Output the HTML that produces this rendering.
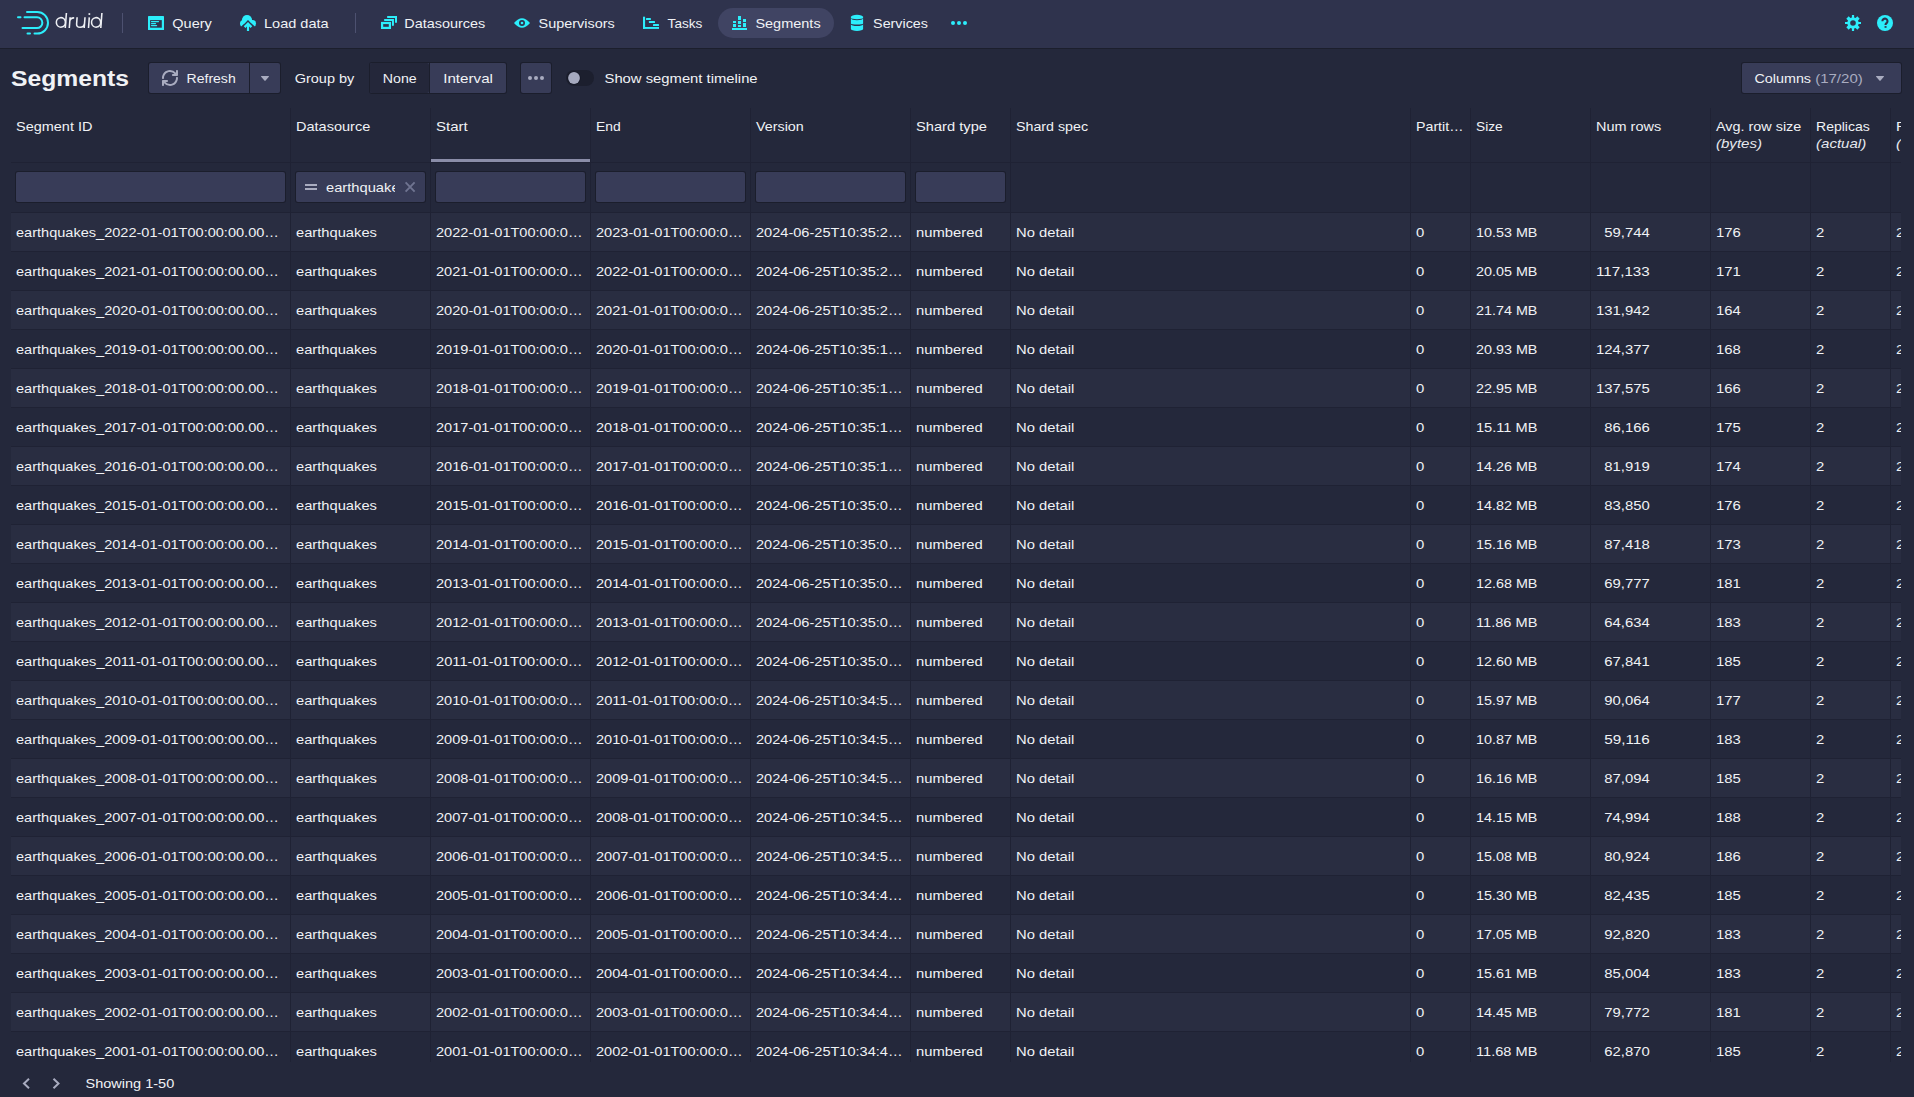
<!DOCTYPE html>
<html><head><meta charset="utf-8"><title>Segments</title>
<style>
html,body{margin:0;padding:0;background:#24283b;overflow:hidden;}
svg{display:block;}
svg{font-family:"Liberation Sans",sans-serif;font-size:13.6px;fill:#f0f2f5;}
</style></head><body>
<svg width="1914" height="1097" viewBox="0 0 1914 1097">
<rect x="0" y="0" width="1914" height="1097" fill="#24283b"/>
<rect x="0" y="0" width="1914" height="48" fill="#2f334d"/>
<rect x="0" y="48" width="1914" height="1" fill="#1c1f2d"/>
<g fill="none" stroke="#2ceefb" stroke-width="2" stroke-linecap="round"><path d="M27,12 H37.2 A10.8,10.8 0 0 1 37.2,33.6 H34.5"/><path d="M24.5,17.3 H37 A5.35,5.35 0 0 1 37,28 H22.5"/><path d="M18,17.3 H20.5"/><path d="M27.5,33.6 H30"/></g>
<g fill="none" stroke="#eef0f4" stroke-width="1.55" stroke-linecap="butt"><ellipse cx="60.9" cy="22.4" rx="4.55" ry="4.75" transform="rotate(-8 60.9 22.4)"/><path d="M66.4,13 L65.3,28"/><path d="M70.1,17.2 L69.3,28 M69.9,20.5 Q71,17.6 74.2,17.9"/><path d="M77.1,17.2 L76.6,24 Q76.4,27.3 80.2,27.3 Q84,27.3 84.3,23.8 M85,17.2 L84.2,28"/><path d="M89.3,17.4 L88.5,28"/><ellipse cx="96.1" cy="22.4" rx="4.55" ry="4.75" transform="rotate(-8 96.1 22.4)"/><path d="M101.9,13 L100.8,28"/></g><rect x="88.5" y="13.2" width="1.7" height="1.7" fill="#eef0f4"/>
<rect x="122" y="13" width="1" height="20" fill="#4d5170"/>
<rect x="355" y="13" width="1" height="20" fill="#4d5170"/>
<rect x="718" y="8" width="116" height="30" fill="#404463" rx="15"/>
<g transform="translate(148,16)" fill="#2ceefb"><rect x="0" y="0" width="16" height="14" rx="0.6"/><rect x="2.1" y="4.1" width="11.7" height="7.6" fill="#2f334d"/><rect x="2.9" y="4.9" width="8.2" height="1.3" rx="0.6"/><rect x="2.9" y="6.9" width="5.2" height="1.3" rx="0.6"/><rect x="2.9" y="8.9" width="6.3" height="1.3" rx="0.6"/></g>
<clipPath id="cu"><path d="M-1,-1 H17 V13.8 L8,4.8 L-1,13.8 Z"/></clipPath>
<g transform="translate(240,15)" fill="#2ceefb"><g clip-path="url(#cu)"><circle cx="7" cy="5.1" r="5.1"/><circle cx="3.6" cy="8.6" r="3.6"/><circle cx="12.5" cy="8.4" r="3.5"/><rect x="3.6" y="5" width="9" height="6"/></g><path d="M4.6,12.1 L8,8.7 L11.4,12.1" stroke="#2ceefb" stroke-width="2.4" fill="none"/><rect x="6.9" y="9" width="2.2" height="7"/></g>
<g transform="translate(381,16)" fill="#2ceefb"><g fill="none" stroke="#2ceefb"><rect x="1.1" y="7" width="7.8" height="4.9" stroke-width="2.2"/><path d="M3.9,3.9 H11.95 V9" stroke-width="2" stroke-linecap="round"/><path d="M6.9,0.9 H15 V6" stroke-width="2" stroke-linecap="round"/></g></g>
<g transform="translate(514,15)" fill="#2ceefb"><path d="M0,8 Q8,-1.5 16,8 Q8,17.5 0,8 Z"/><circle cx="8" cy="8" r="3" fill="#2f334d"/><circle cx="8" cy="8" r="1.3"/></g>
<g transform="translate(643,15)" fill="#2ceefb"><rect x="0" y="1.7" width="2.1" height="12.2"/><rect x="0" y="12" width="16" height="1.9"/><rect x="3" y="2.9" width="4.9" height="2" rx="0.5"/><rect x="5.9" y="6" width="6.1" height="2" rx="0.5"/><rect x="10" y="9.1" width="6" height="1.9" rx="0.5"/></g>
<g fill="#2ceefb" shape-rendering="crispEdges"><rect x="732" y="28" width="15" height="2"/><rect x="733" y="21" width="3" height="2"/><rect x="733" y="24" width="3" height="3"/><rect x="738" y="16" width="3" height="4"/><rect x="738" y="21" width="3" height="3"/><rect x="738" y="25" width="3" height="2"/><rect x="743" y="19" width="3" height="3"/><rect x="743" y="23" width="3" height="4"/></g>
<g fill="#2ceefb"><path d="M850.9,16.8 A6.1,2 0 0 1 863.1,16.8 V18 A6.1,1.2 0 0 1 850.9,18 Z"/><path d="M850.9,18.6 A6.1,1.6 0 0 0 863.1,18.6 V23.6 A6.1,1 0 0 1 850.9,23.6 Z"/><path d="M850.9,24.2 A6.1,1.8 0 0 0 863.1,24.2 V29 A6.1,1.9 0 0 1 850.9,29 Z"/></g>
<g transform="translate(951,15)" fill="#2ceefb"><circle cx="2" cy="8" r="2"/><circle cx="8" cy="8" r="2"/><circle cx="14" cy="8" r="2"/></g>
<g transform="translate(1845,15)" fill="#2ceefb"><path fill-rule="evenodd" d="M6.9,0 H9.1 V2.4 L10.6,3 L12.3,1.3 L14.7,3.7 L13,5.4 L13.6,6.9 H16 V9.1 H13.6 L13,10.6 L14.7,12.3 L12.3,14.7 L10.6,13 L9.1,13.6 V16 H6.9 V13.6 L5.4,13 L3.7,14.7 L1.3,12.3 L3,10.6 L2.4,9.1 H0 V6.9 H2.4 L3,5.4 L1.3,3.7 L3.7,1.3 L5.4,3 L6.9,2.4 Z M8,5.2 A2.8,2.8 0 1 0 8,10.8 A2.8,2.8 0 1 0 8,5.2 Z"/></g>
<g transform="translate(1877,15)" fill="#2ceefb"><circle cx="8" cy="8" r="8"/><path d="M5.4,6.2 A2.55,2.5 0 1 1 9.9,7.7 C9.1,8.5 8.5,8.8 8.5,9.9" fill="none" stroke="#2f334d" stroke-width="2.1"/><rect x="7.55" y="11.1" width="2" height="1.7" fill="#2f334d"/></g>
<text x="172.30" y="28.00" textLength="39.50" lengthAdjust="spacingAndGlyphs">Query</text>
<text x="264.00" y="28.00" textLength="64.59" lengthAdjust="spacingAndGlyphs">Load data</text>
<text x="404.30" y="28.00" textLength="80.97" lengthAdjust="spacingAndGlyphs">Datasources</text>
<text x="538.60" y="28.00" textLength="76.20" lengthAdjust="spacingAndGlyphs">Supervisors</text>
<text x="667.60" y="28.00" textLength="34.81" lengthAdjust="spacingAndGlyphs">Tasks</text>
<text x="755.40" y="28.00" textLength="65.25" lengthAdjust="spacingAndGlyphs">Segments</text>
<text x="873.10" y="28.00" textLength="54.80" lengthAdjust="spacingAndGlyphs">Services</text>
<text x="11.00" y="86.00" font-weight="700" font-size="22.30" textLength="118.02" lengthAdjust="spacingAndGlyphs">Segments</text>
<rect x="148" y="62" width="133" height="32" fill="#1b1e2c" rx="3"/>
<rect x="149" y="63" width="131" height="30" fill="#383c58" rx="2"/>
<rect x="249" y="63" width="1" height="30" fill="#1b1e2c"/>
<g transform="translate(162,70)" fill="#a9acc0"><path d="M14.99 6.99c-.55 0-1 .45-1 1 0 3.31-2.69 6-6 6-1.77 0-3.36-.78-4.46-2h1.46c.55 0 1-.45 1-1s-.45-1-1-1h-4c-.55 0-1 .45-1 1v4c0 .55.45 1 1 1s1-.45 1-1v-1.74a7.95 7.95 0 006 2.74c4.42 0 8-3.58 8-8 0-.55-.45-1-1-1zm0-7c-.55 0-1 .45-1 1v1.74a7.95 7.95 0 00-6-2.74c-4.42 0-8 3.58-8 8 0 .55.45 1 1 1s1-.45 1-1c0-3.31 2.69-6 6-6 1.77 0 3.36.78 4.46 2h-1.46c-.55 0-1 .45-1 1s.45 1 1 1h4c.55 0 1-.45 1-1v-4c0-.55-.45-1-1-1z"/></g>
<text x="186.60" y="83.00" textLength="49.09" lengthAdjust="spacingAndGlyphs">Refresh</text>
<g transform="translate(257,70)" fill="#a9acc0"><path d="M12 6.5c0-.28-.22-.5-.5-.5h-7a.495.495 0 00-.37.83l3.5 4c.09.1.22.17.37.17s.28-.07.37-.17l3.5-4c.08-.09.13-.2.13-.33z"/></g>
<text x="294.70" y="83.00" textLength="59.64" lengthAdjust="spacingAndGlyphs">Group by</text>
<rect x="369" y="62" width="138" height="32" fill="#1b1e2c" rx="3"/>
<rect x="370" y="63" width="136" height="30" fill="#383c58" rx="2"/>
<rect x="370" y="63" width="59" height="30" fill="#24273a" rx="2"/>
<rect x="429" y="63" width="1" height="30" fill="#1b1e2c"/>
<text x="382.80" y="83.00" textLength="33.91" lengthAdjust="spacingAndGlyphs">None</text>
<text x="443.20" y="83.00" textLength="49.77" lengthAdjust="spacingAndGlyphs">Interval</text>
<rect x="520" y="62" width="32" height="32" fill="#1b1e2c" rx="3"/>
<rect x="521" y="63" width="30" height="30" fill="#383c58" rx="2"/>
<g transform="translate(528,70)" fill="#a9acc0"><circle cx="2" cy="8" r="2"/><circle cx="8" cy="8" r="2"/><circle cx="14" cy="8" r="2"/></g>
<rect x="566" y="70" width="28" height="16" fill="#1c1f2e" rx="8"/>
<circle cx="574" cy="78" r="6.6" fill="#131624"/><circle cx="574" cy="78" r="5.9" fill="#a5a9be"/>
<text x="604.50" y="83.00" textLength="153.12" lengthAdjust="spacingAndGlyphs">Show segment timeline</text>
<rect x="1741" y="62" width="161" height="32" fill="#1b1e2c" rx="3"/>
<rect x="1742" y="63" width="159" height="30" fill="#383c58" rx="2"/>
<text x="1754.50" y="83.00" textLength="56.53" lengthAdjust="spacingAndGlyphs">Columns</text>
<text x="1815.16" y="83.00" fill="#a9acc0" textLength="47.59" lengthAdjust="spacingAndGlyphs">(17/20)</text>
<g transform="translate(1872,70)" fill="#a9acc0"><path d="M12 6.5c0-.28-.22-.5-.5-.5h-7a.495.495 0 00-.37.83l3.5 4c.09.1.22.17.37.17s.28-.07.37-.17l3.5-4c.08-.09.13-.2.13-.33z"/></g>
<clipPath id="tc"><rect x="11" y="0" width="1890" height="1097"/></clipPath>
<g clip-path="url(#tc)">
<rect x="11" y="213" width="1890" height="38" fill="#292d41"/>
<rect x="11" y="291" width="1890" height="38" fill="#292d41"/>
<rect x="11" y="369" width="1890" height="38" fill="#292d41"/>
<rect x="11" y="447" width="1890" height="38" fill="#292d41"/>
<rect x="11" y="525" width="1890" height="38" fill="#292d41"/>
<rect x="11" y="603" width="1890" height="38" fill="#292d41"/>
<rect x="11" y="681" width="1890" height="38" fill="#292d41"/>
<rect x="11" y="759" width="1890" height="38" fill="#292d41"/>
<rect x="11" y="837" width="1890" height="38" fill="#292d41"/>
<rect x="11" y="915" width="1890" height="38" fill="#292d41"/>
<rect x="11" y="993" width="1890" height="38" fill="#292d41"/>
<rect x="11" y="162" width="1890" height="1" fill="#1f2234"/>
<rect x="11" y="212" width="1890" height="1" fill="#1f2234"/>
<rect x="11" y="251" width="1890" height="1" fill="#1f2234"/>
<rect x="11" y="290" width="1890" height="1" fill="#1f2234"/>
<rect x="11" y="329" width="1890" height="1" fill="#1f2234"/>
<rect x="11" y="368" width="1890" height="1" fill="#1f2234"/>
<rect x="11" y="407" width="1890" height="1" fill="#1f2234"/>
<rect x="11" y="446" width="1890" height="1" fill="#1f2234"/>
<rect x="11" y="485" width="1890" height="1" fill="#1f2234"/>
<rect x="11" y="524" width="1890" height="1" fill="#1f2234"/>
<rect x="11" y="563" width="1890" height="1" fill="#1f2234"/>
<rect x="11" y="602" width="1890" height="1" fill="#1f2234"/>
<rect x="11" y="641" width="1890" height="1" fill="#1f2234"/>
<rect x="11" y="680" width="1890" height="1" fill="#1f2234"/>
<rect x="11" y="719" width="1890" height="1" fill="#1f2234"/>
<rect x="11" y="758" width="1890" height="1" fill="#1f2234"/>
<rect x="11" y="797" width="1890" height="1" fill="#1f2234"/>
<rect x="11" y="836" width="1890" height="1" fill="#1f2234"/>
<rect x="11" y="875" width="1890" height="1" fill="#1f2234"/>
<rect x="11" y="914" width="1890" height="1" fill="#1f2234"/>
<rect x="11" y="953" width="1890" height="1" fill="#1f2234"/>
<rect x="11" y="992" width="1890" height="1" fill="#1f2234"/>
<rect x="11" y="1031" width="1890" height="1" fill="#1f2234"/>
<rect x="290" y="108" width="1" height="954" fill="#1f2234"/>
<rect x="430" y="108" width="1" height="954" fill="#1f2234"/>
<rect x="590" y="108" width="1" height="954" fill="#1f2234"/>
<rect x="750" y="108" width="1" height="954" fill="#1f2234"/>
<rect x="910" y="108" width="1" height="954" fill="#1f2234"/>
<rect x="1010" y="108" width="1" height="954" fill="#1f2234"/>
<rect x="1410" y="108" width="1" height="954" fill="#1f2234"/>
<rect x="1470" y="108" width="1" height="954" fill="#1f2234"/>
<rect x="1590" y="108" width="1" height="954" fill="#1f2234"/>
<rect x="1710" y="108" width="1" height="954" fill="#1f2234"/>
<rect x="1810" y="108" width="1" height="954" fill="#1f2234"/>
<rect x="1890" y="108" width="1" height="954" fill="#1f2234"/>
<rect x="431" y="159" width="159" height="3" fill="#8a8da8"/>
<text x="16.00" y="131.00" textLength="76.45" lengthAdjust="spacingAndGlyphs">Segment ID</text>
<text x="296.00" y="131.00" textLength="74.20" lengthAdjust="spacingAndGlyphs">Datasource</text>
<text x="436.00" y="131.00" textLength="31.75" lengthAdjust="spacingAndGlyphs">Start</text>
<text x="596.00" y="131.00" textLength="24.70" lengthAdjust="spacingAndGlyphs">End</text>
<text x="756.00" y="131.00" textLength="47.78" lengthAdjust="spacingAndGlyphs">Version</text>
<text x="916.00" y="131.00" textLength="70.97" lengthAdjust="spacingAndGlyphs">Shard type</text>
<text x="1016.00" y="131.00" textLength="72.09" lengthAdjust="spacingAndGlyphs">Shard spec</text>
<text x="1416.00" y="131.00" textLength="47.38" lengthAdjust="spacingAndGlyphs">Partit…</text>
<text x="1476.00" y="131.00" textLength="26.69" lengthAdjust="spacingAndGlyphs">Size</text>
<text x="1596.00" y="131.00" textLength="65.14" lengthAdjust="spacingAndGlyphs">Num rows</text>
<text x="1716.00" y="131.00" textLength="85.28" lengthAdjust="spacingAndGlyphs">Avg. row size</text>
<text x="1816.00" y="131.00" textLength="53.80" lengthAdjust="spacingAndGlyphs">Replicas</text>
<text x="1896.00" y="131.00" textLength="114.12" lengthAdjust="spacingAndGlyphs">Replication factor</text>
<text x="1716.00" y="147.50" font-style="italic" fill="#e6e8ee" textLength="45.95" lengthAdjust="spacingAndGlyphs">(bytes)</text>
<text x="1816.00" y="147.50" font-style="italic" fill="#e6e8ee" textLength="50.17" lengthAdjust="spacingAndGlyphs">(actual)</text>
<text x="1896.00" y="147.50" font-style="italic" fill="#e6e8ee" textLength="49.91" lengthAdjust="spacingAndGlyphs">(target)</text>
<rect x="15" y="171" width="271" height="32" fill="#1b1e2c" rx="3"/>
<rect x="16" y="172" width="269" height="30" fill="#383c58" rx="2"/>
<rect x="295" y="171" width="131" height="32" fill="#1b1e2c" rx="3"/>
<rect x="296" y="172" width="129" height="30" fill="#383c58" rx="2"/>
<rect x="435" y="171" width="151" height="32" fill="#1b1e2c" rx="3"/>
<rect x="436" y="172" width="149" height="30" fill="#383c58" rx="2"/>
<rect x="595" y="171" width="151" height="32" fill="#1b1e2c" rx="3"/>
<rect x="596" y="172" width="149" height="30" fill="#383c58" rx="2"/>
<rect x="755" y="171" width="151" height="32" fill="#1b1e2c" rx="3"/>
<rect x="756" y="172" width="149" height="30" fill="#383c58" rx="2"/>
<rect x="915" y="171" width="91" height="32" fill="#1b1e2c" rx="3"/>
<rect x="916" y="172" width="89" height="30" fill="#383c58" rx="2"/>
<g transform="translate(303,179)" fill="#a9acc0"><rect x="2" y="5" width="12" height="2"/><rect x="2" y="9" width="12" height="2"/></g>
<clipPath id="fc"><rect x="326" y="172" width="69" height="30"/></clipPath>
<text x="326.00" y="192.00" textLength="80.92" lengthAdjust="spacingAndGlyphs" clip-path="url(#fc)">earthquakes</text>
<path d="M405.6,182.4 L414.6,191.6 M414.6,182.4 L405.6,191.6" stroke="#6f7491" stroke-width="1.9" fill="none"/>
<text x="16.00" y="237.00" textLength="262.86" lengthAdjust="spacingAndGlyphs">earthquakes_2022-01-01T00:00:00.00…</text>
<text x="296.00" y="237.00" textLength="80.92" lengthAdjust="spacingAndGlyphs">earthquakes</text>
<text x="436.00" y="237.00" textLength="146.52" lengthAdjust="spacingAndGlyphs">2022-01-01T00:00:0…</text>
<text x="596.00" y="237.00" textLength="146.52" lengthAdjust="spacingAndGlyphs">2023-01-01T00:00:0…</text>
<text x="756.00" y="237.00" textLength="146.52" lengthAdjust="spacingAndGlyphs">2024-06-25T10:35:2…</text>
<text x="916.00" y="237.00" textLength="66.69" lengthAdjust="spacingAndGlyphs">numbered</text>
<text x="1016.00" y="237.00" textLength="58.33" lengthAdjust="spacingAndGlyphs">No detail</text>
<text x="1416.00" y="237.00" textLength="8.27" lengthAdjust="spacingAndGlyphs">0</text>
<text x="1476.00" y="237.00" textLength="61.45" lengthAdjust="spacingAndGlyphs">10.53 MB</text>
<text x="1716.00" y="237.00" textLength="24.80" lengthAdjust="spacingAndGlyphs">176</text>
<text x="1816.00" y="237.00" textLength="8.27" lengthAdjust="spacingAndGlyphs">2</text>
<text x="1896.00" y="237.00" textLength="8.27" lengthAdjust="spacingAndGlyphs">2</text>
<text x="1604.27" y="237.00" textLength="45.45" lengthAdjust="spacingAndGlyphs">59,744</text>
<text x="16.00" y="276.00" textLength="262.86" lengthAdjust="spacingAndGlyphs">earthquakes_2021-01-01T00:00:00.00…</text>
<text x="296.00" y="276.00" textLength="80.92" lengthAdjust="spacingAndGlyphs">earthquakes</text>
<text x="436.00" y="276.00" textLength="146.52" lengthAdjust="spacingAndGlyphs">2021-01-01T00:00:0…</text>
<text x="596.00" y="276.00" textLength="146.52" lengthAdjust="spacingAndGlyphs">2022-01-01T00:00:0…</text>
<text x="756.00" y="276.00" textLength="146.52" lengthAdjust="spacingAndGlyphs">2024-06-25T10:35:2…</text>
<text x="916.00" y="276.00" textLength="66.69" lengthAdjust="spacingAndGlyphs">numbered</text>
<text x="1016.00" y="276.00" textLength="58.33" lengthAdjust="spacingAndGlyphs">No detail</text>
<text x="1416.00" y="276.00" textLength="8.27" lengthAdjust="spacingAndGlyphs">0</text>
<text x="1476.00" y="276.00" textLength="61.45" lengthAdjust="spacingAndGlyphs">20.05 MB</text>
<text x="1716.00" y="276.00" textLength="24.80" lengthAdjust="spacingAndGlyphs">171</text>
<text x="1816.00" y="276.00" textLength="8.27" lengthAdjust="spacingAndGlyphs">2</text>
<text x="1896.00" y="276.00" textLength="8.27" lengthAdjust="spacingAndGlyphs">2</text>
<text x="1596.00" y="276.00" textLength="53.72" lengthAdjust="spacingAndGlyphs">117,133</text>
<text x="16.00" y="315.00" textLength="262.86" lengthAdjust="spacingAndGlyphs">earthquakes_2020-01-01T00:00:00.00…</text>
<text x="296.00" y="315.00" textLength="80.92" lengthAdjust="spacingAndGlyphs">earthquakes</text>
<text x="436.00" y="315.00" textLength="146.52" lengthAdjust="spacingAndGlyphs">2020-01-01T00:00:0…</text>
<text x="596.00" y="315.00" textLength="146.52" lengthAdjust="spacingAndGlyphs">2021-01-01T00:00:0…</text>
<text x="756.00" y="315.00" textLength="146.52" lengthAdjust="spacingAndGlyphs">2024-06-25T10:35:2…</text>
<text x="916.00" y="315.00" textLength="66.69" lengthAdjust="spacingAndGlyphs">numbered</text>
<text x="1016.00" y="315.00" textLength="58.33" lengthAdjust="spacingAndGlyphs">No detail</text>
<text x="1416.00" y="315.00" textLength="8.27" lengthAdjust="spacingAndGlyphs">0</text>
<text x="1476.00" y="315.00" textLength="61.45" lengthAdjust="spacingAndGlyphs">21.74 MB</text>
<text x="1716.00" y="315.00" textLength="24.80" lengthAdjust="spacingAndGlyphs">164</text>
<text x="1816.00" y="315.00" textLength="8.27" lengthAdjust="spacingAndGlyphs">2</text>
<text x="1896.00" y="315.00" textLength="8.27" lengthAdjust="spacingAndGlyphs">2</text>
<text x="1596.00" y="315.00" textLength="53.72" lengthAdjust="spacingAndGlyphs">131,942</text>
<text x="16.00" y="354.00" textLength="262.86" lengthAdjust="spacingAndGlyphs">earthquakes_2019-01-01T00:00:00.00…</text>
<text x="296.00" y="354.00" textLength="80.92" lengthAdjust="spacingAndGlyphs">earthquakes</text>
<text x="436.00" y="354.00" textLength="146.52" lengthAdjust="spacingAndGlyphs">2019-01-01T00:00:0…</text>
<text x="596.00" y="354.00" textLength="146.52" lengthAdjust="spacingAndGlyphs">2020-01-01T00:00:0…</text>
<text x="756.00" y="354.00" textLength="146.52" lengthAdjust="spacingAndGlyphs">2024-06-25T10:35:1…</text>
<text x="916.00" y="354.00" textLength="66.69" lengthAdjust="spacingAndGlyphs">numbered</text>
<text x="1016.00" y="354.00" textLength="58.33" lengthAdjust="spacingAndGlyphs">No detail</text>
<text x="1416.00" y="354.00" textLength="8.27" lengthAdjust="spacingAndGlyphs">0</text>
<text x="1476.00" y="354.00" textLength="61.45" lengthAdjust="spacingAndGlyphs">20.93 MB</text>
<text x="1716.00" y="354.00" textLength="24.80" lengthAdjust="spacingAndGlyphs">168</text>
<text x="1816.00" y="354.00" textLength="8.27" lengthAdjust="spacingAndGlyphs">2</text>
<text x="1896.00" y="354.00" textLength="8.27" lengthAdjust="spacingAndGlyphs">2</text>
<text x="1596.00" y="354.00" textLength="53.72" lengthAdjust="spacingAndGlyphs">124,377</text>
<text x="16.00" y="393.00" textLength="262.86" lengthAdjust="spacingAndGlyphs">earthquakes_2018-01-01T00:00:00.00…</text>
<text x="296.00" y="393.00" textLength="80.92" lengthAdjust="spacingAndGlyphs">earthquakes</text>
<text x="436.00" y="393.00" textLength="146.52" lengthAdjust="spacingAndGlyphs">2018-01-01T00:00:0…</text>
<text x="596.00" y="393.00" textLength="146.52" lengthAdjust="spacingAndGlyphs">2019-01-01T00:00:0…</text>
<text x="756.00" y="393.00" textLength="146.52" lengthAdjust="spacingAndGlyphs">2024-06-25T10:35:1…</text>
<text x="916.00" y="393.00" textLength="66.69" lengthAdjust="spacingAndGlyphs">numbered</text>
<text x="1016.00" y="393.00" textLength="58.33" lengthAdjust="spacingAndGlyphs">No detail</text>
<text x="1416.00" y="393.00" textLength="8.27" lengthAdjust="spacingAndGlyphs">0</text>
<text x="1476.00" y="393.00" textLength="61.45" lengthAdjust="spacingAndGlyphs">22.95 MB</text>
<text x="1716.00" y="393.00" textLength="24.80" lengthAdjust="spacingAndGlyphs">166</text>
<text x="1816.00" y="393.00" textLength="8.27" lengthAdjust="spacingAndGlyphs">2</text>
<text x="1896.00" y="393.00" textLength="8.27" lengthAdjust="spacingAndGlyphs">2</text>
<text x="1596.00" y="393.00" textLength="53.72" lengthAdjust="spacingAndGlyphs">137,575</text>
<text x="16.00" y="432.00" textLength="262.86" lengthAdjust="spacingAndGlyphs">earthquakes_2017-01-01T00:00:00.00…</text>
<text x="296.00" y="432.00" textLength="80.92" lengthAdjust="spacingAndGlyphs">earthquakes</text>
<text x="436.00" y="432.00" textLength="146.52" lengthAdjust="spacingAndGlyphs">2017-01-01T00:00:0…</text>
<text x="596.00" y="432.00" textLength="146.52" lengthAdjust="spacingAndGlyphs">2018-01-01T00:00:0…</text>
<text x="756.00" y="432.00" textLength="146.52" lengthAdjust="spacingAndGlyphs">2024-06-25T10:35:1…</text>
<text x="916.00" y="432.00" textLength="66.69" lengthAdjust="spacingAndGlyphs">numbered</text>
<text x="1016.00" y="432.00" textLength="58.33" lengthAdjust="spacingAndGlyphs">No detail</text>
<text x="1416.00" y="432.00" textLength="8.27" lengthAdjust="spacingAndGlyphs">0</text>
<text x="1476.00" y="432.00" textLength="61.45" lengthAdjust="spacingAndGlyphs">15.11 MB</text>
<text x="1716.00" y="432.00" textLength="24.80" lengthAdjust="spacingAndGlyphs">175</text>
<text x="1816.00" y="432.00" textLength="8.27" lengthAdjust="spacingAndGlyphs">2</text>
<text x="1896.00" y="432.00" textLength="8.27" lengthAdjust="spacingAndGlyphs">2</text>
<text x="1604.27" y="432.00" textLength="45.45" lengthAdjust="spacingAndGlyphs">86,166</text>
<text x="16.00" y="471.00" textLength="262.86" lengthAdjust="spacingAndGlyphs">earthquakes_2016-01-01T00:00:00.00…</text>
<text x="296.00" y="471.00" textLength="80.92" lengthAdjust="spacingAndGlyphs">earthquakes</text>
<text x="436.00" y="471.00" textLength="146.52" lengthAdjust="spacingAndGlyphs">2016-01-01T00:00:0…</text>
<text x="596.00" y="471.00" textLength="146.52" lengthAdjust="spacingAndGlyphs">2017-01-01T00:00:0…</text>
<text x="756.00" y="471.00" textLength="146.52" lengthAdjust="spacingAndGlyphs">2024-06-25T10:35:1…</text>
<text x="916.00" y="471.00" textLength="66.69" lengthAdjust="spacingAndGlyphs">numbered</text>
<text x="1016.00" y="471.00" textLength="58.33" lengthAdjust="spacingAndGlyphs">No detail</text>
<text x="1416.00" y="471.00" textLength="8.27" lengthAdjust="spacingAndGlyphs">0</text>
<text x="1476.00" y="471.00" textLength="61.45" lengthAdjust="spacingAndGlyphs">14.26 MB</text>
<text x="1716.00" y="471.00" textLength="24.80" lengthAdjust="spacingAndGlyphs">174</text>
<text x="1816.00" y="471.00" textLength="8.27" lengthAdjust="spacingAndGlyphs">2</text>
<text x="1896.00" y="471.00" textLength="8.27" lengthAdjust="spacingAndGlyphs">2</text>
<text x="1604.27" y="471.00" textLength="45.45" lengthAdjust="spacingAndGlyphs">81,919</text>
<text x="16.00" y="510.00" textLength="262.86" lengthAdjust="spacingAndGlyphs">earthquakes_2015-01-01T00:00:00.00…</text>
<text x="296.00" y="510.00" textLength="80.92" lengthAdjust="spacingAndGlyphs">earthquakes</text>
<text x="436.00" y="510.00" textLength="146.52" lengthAdjust="spacingAndGlyphs">2015-01-01T00:00:0…</text>
<text x="596.00" y="510.00" textLength="146.52" lengthAdjust="spacingAndGlyphs">2016-01-01T00:00:0…</text>
<text x="756.00" y="510.00" textLength="146.52" lengthAdjust="spacingAndGlyphs">2024-06-25T10:35:0…</text>
<text x="916.00" y="510.00" textLength="66.69" lengthAdjust="spacingAndGlyphs">numbered</text>
<text x="1016.00" y="510.00" textLength="58.33" lengthAdjust="spacingAndGlyphs">No detail</text>
<text x="1416.00" y="510.00" textLength="8.27" lengthAdjust="spacingAndGlyphs">0</text>
<text x="1476.00" y="510.00" textLength="61.45" lengthAdjust="spacingAndGlyphs">14.82 MB</text>
<text x="1716.00" y="510.00" textLength="24.80" lengthAdjust="spacingAndGlyphs">176</text>
<text x="1816.00" y="510.00" textLength="8.27" lengthAdjust="spacingAndGlyphs">2</text>
<text x="1896.00" y="510.00" textLength="8.27" lengthAdjust="spacingAndGlyphs">2</text>
<text x="1604.27" y="510.00" textLength="45.45" lengthAdjust="spacingAndGlyphs">83,850</text>
<text x="16.00" y="549.00" textLength="262.86" lengthAdjust="spacingAndGlyphs">earthquakes_2014-01-01T00:00:00.00…</text>
<text x="296.00" y="549.00" textLength="80.92" lengthAdjust="spacingAndGlyphs">earthquakes</text>
<text x="436.00" y="549.00" textLength="146.52" lengthAdjust="spacingAndGlyphs">2014-01-01T00:00:0…</text>
<text x="596.00" y="549.00" textLength="146.52" lengthAdjust="spacingAndGlyphs">2015-01-01T00:00:0…</text>
<text x="756.00" y="549.00" textLength="146.52" lengthAdjust="spacingAndGlyphs">2024-06-25T10:35:0…</text>
<text x="916.00" y="549.00" textLength="66.69" lengthAdjust="spacingAndGlyphs">numbered</text>
<text x="1016.00" y="549.00" textLength="58.33" lengthAdjust="spacingAndGlyphs">No detail</text>
<text x="1416.00" y="549.00" textLength="8.27" lengthAdjust="spacingAndGlyphs">0</text>
<text x="1476.00" y="549.00" textLength="61.45" lengthAdjust="spacingAndGlyphs">15.16 MB</text>
<text x="1716.00" y="549.00" textLength="24.80" lengthAdjust="spacingAndGlyphs">173</text>
<text x="1816.00" y="549.00" textLength="8.27" lengthAdjust="spacingAndGlyphs">2</text>
<text x="1896.00" y="549.00" textLength="8.27" lengthAdjust="spacingAndGlyphs">2</text>
<text x="1604.27" y="549.00" textLength="45.45" lengthAdjust="spacingAndGlyphs">87,418</text>
<text x="16.00" y="588.00" textLength="262.86" lengthAdjust="spacingAndGlyphs">earthquakes_2013-01-01T00:00:00.00…</text>
<text x="296.00" y="588.00" textLength="80.92" lengthAdjust="spacingAndGlyphs">earthquakes</text>
<text x="436.00" y="588.00" textLength="146.52" lengthAdjust="spacingAndGlyphs">2013-01-01T00:00:0…</text>
<text x="596.00" y="588.00" textLength="146.52" lengthAdjust="spacingAndGlyphs">2014-01-01T00:00:0…</text>
<text x="756.00" y="588.00" textLength="146.52" lengthAdjust="spacingAndGlyphs">2024-06-25T10:35:0…</text>
<text x="916.00" y="588.00" textLength="66.69" lengthAdjust="spacingAndGlyphs">numbered</text>
<text x="1016.00" y="588.00" textLength="58.33" lengthAdjust="spacingAndGlyphs">No detail</text>
<text x="1416.00" y="588.00" textLength="8.27" lengthAdjust="spacingAndGlyphs">0</text>
<text x="1476.00" y="588.00" textLength="61.45" lengthAdjust="spacingAndGlyphs">12.68 MB</text>
<text x="1716.00" y="588.00" textLength="24.80" lengthAdjust="spacingAndGlyphs">181</text>
<text x="1816.00" y="588.00" textLength="8.27" lengthAdjust="spacingAndGlyphs">2</text>
<text x="1896.00" y="588.00" textLength="8.27" lengthAdjust="spacingAndGlyphs">2</text>
<text x="1604.27" y="588.00" textLength="45.45" lengthAdjust="spacingAndGlyphs">69,777</text>
<text x="16.00" y="627.00" textLength="262.86" lengthAdjust="spacingAndGlyphs">earthquakes_2012-01-01T00:00:00.00…</text>
<text x="296.00" y="627.00" textLength="80.92" lengthAdjust="spacingAndGlyphs">earthquakes</text>
<text x="436.00" y="627.00" textLength="146.52" lengthAdjust="spacingAndGlyphs">2012-01-01T00:00:0…</text>
<text x="596.00" y="627.00" textLength="146.52" lengthAdjust="spacingAndGlyphs">2013-01-01T00:00:0…</text>
<text x="756.00" y="627.00" textLength="146.52" lengthAdjust="spacingAndGlyphs">2024-06-25T10:35:0…</text>
<text x="916.00" y="627.00" textLength="66.69" lengthAdjust="spacingAndGlyphs">numbered</text>
<text x="1016.00" y="627.00" textLength="58.33" lengthAdjust="spacingAndGlyphs">No detail</text>
<text x="1416.00" y="627.00" textLength="8.27" lengthAdjust="spacingAndGlyphs">0</text>
<text x="1476.00" y="627.00" textLength="61.45" lengthAdjust="spacingAndGlyphs">11.86 MB</text>
<text x="1716.00" y="627.00" textLength="24.80" lengthAdjust="spacingAndGlyphs">183</text>
<text x="1816.00" y="627.00" textLength="8.27" lengthAdjust="spacingAndGlyphs">2</text>
<text x="1896.00" y="627.00" textLength="8.27" lengthAdjust="spacingAndGlyphs">2</text>
<text x="1604.27" y="627.00" textLength="45.45" lengthAdjust="spacingAndGlyphs">64,634</text>
<text x="16.00" y="666.00" textLength="262.86" lengthAdjust="spacingAndGlyphs">earthquakes_2011-01-01T00:00:00.00…</text>
<text x="296.00" y="666.00" textLength="80.92" lengthAdjust="spacingAndGlyphs">earthquakes</text>
<text x="436.00" y="666.00" textLength="146.52" lengthAdjust="spacingAndGlyphs">2011-01-01T00:00:0…</text>
<text x="596.00" y="666.00" textLength="146.52" lengthAdjust="spacingAndGlyphs">2012-01-01T00:00:0…</text>
<text x="756.00" y="666.00" textLength="146.52" lengthAdjust="spacingAndGlyphs">2024-06-25T10:35:0…</text>
<text x="916.00" y="666.00" textLength="66.69" lengthAdjust="spacingAndGlyphs">numbered</text>
<text x="1016.00" y="666.00" textLength="58.33" lengthAdjust="spacingAndGlyphs">No detail</text>
<text x="1416.00" y="666.00" textLength="8.27" lengthAdjust="spacingAndGlyphs">0</text>
<text x="1476.00" y="666.00" textLength="61.45" lengthAdjust="spacingAndGlyphs">12.60 MB</text>
<text x="1716.00" y="666.00" textLength="24.80" lengthAdjust="spacingAndGlyphs">185</text>
<text x="1816.00" y="666.00" textLength="8.27" lengthAdjust="spacingAndGlyphs">2</text>
<text x="1896.00" y="666.00" textLength="8.27" lengthAdjust="spacingAndGlyphs">2</text>
<text x="1604.27" y="666.00" textLength="45.45" lengthAdjust="spacingAndGlyphs">67,841</text>
<text x="16.00" y="705.00" textLength="262.86" lengthAdjust="spacingAndGlyphs">earthquakes_2010-01-01T00:00:00.00…</text>
<text x="296.00" y="705.00" textLength="80.92" lengthAdjust="spacingAndGlyphs">earthquakes</text>
<text x="436.00" y="705.00" textLength="146.52" lengthAdjust="spacingAndGlyphs">2010-01-01T00:00:0…</text>
<text x="596.00" y="705.00" textLength="146.52" lengthAdjust="spacingAndGlyphs">2011-01-01T00:00:0…</text>
<text x="756.00" y="705.00" textLength="146.52" lengthAdjust="spacingAndGlyphs">2024-06-25T10:34:5…</text>
<text x="916.00" y="705.00" textLength="66.69" lengthAdjust="spacingAndGlyphs">numbered</text>
<text x="1016.00" y="705.00" textLength="58.33" lengthAdjust="spacingAndGlyphs">No detail</text>
<text x="1416.00" y="705.00" textLength="8.27" lengthAdjust="spacingAndGlyphs">0</text>
<text x="1476.00" y="705.00" textLength="61.45" lengthAdjust="spacingAndGlyphs">15.97 MB</text>
<text x="1716.00" y="705.00" textLength="24.80" lengthAdjust="spacingAndGlyphs">177</text>
<text x="1816.00" y="705.00" textLength="8.27" lengthAdjust="spacingAndGlyphs">2</text>
<text x="1896.00" y="705.00" textLength="8.27" lengthAdjust="spacingAndGlyphs">2</text>
<text x="1604.27" y="705.00" textLength="45.45" lengthAdjust="spacingAndGlyphs">90,064</text>
<text x="16.00" y="744.00" textLength="262.86" lengthAdjust="spacingAndGlyphs">earthquakes_2009-01-01T00:00:00.00…</text>
<text x="296.00" y="744.00" textLength="80.92" lengthAdjust="spacingAndGlyphs">earthquakes</text>
<text x="436.00" y="744.00" textLength="146.52" lengthAdjust="spacingAndGlyphs">2009-01-01T00:00:0…</text>
<text x="596.00" y="744.00" textLength="146.52" lengthAdjust="spacingAndGlyphs">2010-01-01T00:00:0…</text>
<text x="756.00" y="744.00" textLength="146.52" lengthAdjust="spacingAndGlyphs">2024-06-25T10:34:5…</text>
<text x="916.00" y="744.00" textLength="66.69" lengthAdjust="spacingAndGlyphs">numbered</text>
<text x="1016.00" y="744.00" textLength="58.33" lengthAdjust="spacingAndGlyphs">No detail</text>
<text x="1416.00" y="744.00" textLength="8.27" lengthAdjust="spacingAndGlyphs">0</text>
<text x="1476.00" y="744.00" textLength="61.45" lengthAdjust="spacingAndGlyphs">10.87 MB</text>
<text x="1716.00" y="744.00" textLength="24.80" lengthAdjust="spacingAndGlyphs">183</text>
<text x="1816.00" y="744.00" textLength="8.27" lengthAdjust="spacingAndGlyphs">2</text>
<text x="1896.00" y="744.00" textLength="8.27" lengthAdjust="spacingAndGlyphs">2</text>
<text x="1604.27" y="744.00" textLength="45.45" lengthAdjust="spacingAndGlyphs">59,116</text>
<text x="16.00" y="783.00" textLength="262.86" lengthAdjust="spacingAndGlyphs">earthquakes_2008-01-01T00:00:00.00…</text>
<text x="296.00" y="783.00" textLength="80.92" lengthAdjust="spacingAndGlyphs">earthquakes</text>
<text x="436.00" y="783.00" textLength="146.52" lengthAdjust="spacingAndGlyphs">2008-01-01T00:00:0…</text>
<text x="596.00" y="783.00" textLength="146.52" lengthAdjust="spacingAndGlyphs">2009-01-01T00:00:0…</text>
<text x="756.00" y="783.00" textLength="146.52" lengthAdjust="spacingAndGlyphs">2024-06-25T10:34:5…</text>
<text x="916.00" y="783.00" textLength="66.69" lengthAdjust="spacingAndGlyphs">numbered</text>
<text x="1016.00" y="783.00" textLength="58.33" lengthAdjust="spacingAndGlyphs">No detail</text>
<text x="1416.00" y="783.00" textLength="8.27" lengthAdjust="spacingAndGlyphs">0</text>
<text x="1476.00" y="783.00" textLength="61.45" lengthAdjust="spacingAndGlyphs">16.16 MB</text>
<text x="1716.00" y="783.00" textLength="24.80" lengthAdjust="spacingAndGlyphs">185</text>
<text x="1816.00" y="783.00" textLength="8.27" lengthAdjust="spacingAndGlyphs">2</text>
<text x="1896.00" y="783.00" textLength="8.27" lengthAdjust="spacingAndGlyphs">2</text>
<text x="1604.27" y="783.00" textLength="45.45" lengthAdjust="spacingAndGlyphs">87,094</text>
<text x="16.00" y="822.00" textLength="262.86" lengthAdjust="spacingAndGlyphs">earthquakes_2007-01-01T00:00:00.00…</text>
<text x="296.00" y="822.00" textLength="80.92" lengthAdjust="spacingAndGlyphs">earthquakes</text>
<text x="436.00" y="822.00" textLength="146.52" lengthAdjust="spacingAndGlyphs">2007-01-01T00:00:0…</text>
<text x="596.00" y="822.00" textLength="146.52" lengthAdjust="spacingAndGlyphs">2008-01-01T00:00:0…</text>
<text x="756.00" y="822.00" textLength="146.52" lengthAdjust="spacingAndGlyphs">2024-06-25T10:34:5…</text>
<text x="916.00" y="822.00" textLength="66.69" lengthAdjust="spacingAndGlyphs">numbered</text>
<text x="1016.00" y="822.00" textLength="58.33" lengthAdjust="spacingAndGlyphs">No detail</text>
<text x="1416.00" y="822.00" textLength="8.27" lengthAdjust="spacingAndGlyphs">0</text>
<text x="1476.00" y="822.00" textLength="61.45" lengthAdjust="spacingAndGlyphs">14.15 MB</text>
<text x="1716.00" y="822.00" textLength="24.80" lengthAdjust="spacingAndGlyphs">188</text>
<text x="1816.00" y="822.00" textLength="8.27" lengthAdjust="spacingAndGlyphs">2</text>
<text x="1896.00" y="822.00" textLength="8.27" lengthAdjust="spacingAndGlyphs">2</text>
<text x="1604.27" y="822.00" textLength="45.45" lengthAdjust="spacingAndGlyphs">74,994</text>
<text x="16.00" y="861.00" textLength="262.86" lengthAdjust="spacingAndGlyphs">earthquakes_2006-01-01T00:00:00.00…</text>
<text x="296.00" y="861.00" textLength="80.92" lengthAdjust="spacingAndGlyphs">earthquakes</text>
<text x="436.00" y="861.00" textLength="146.52" lengthAdjust="spacingAndGlyphs">2006-01-01T00:00:0…</text>
<text x="596.00" y="861.00" textLength="146.52" lengthAdjust="spacingAndGlyphs">2007-01-01T00:00:0…</text>
<text x="756.00" y="861.00" textLength="146.52" lengthAdjust="spacingAndGlyphs">2024-06-25T10:34:5…</text>
<text x="916.00" y="861.00" textLength="66.69" lengthAdjust="spacingAndGlyphs">numbered</text>
<text x="1016.00" y="861.00" textLength="58.33" lengthAdjust="spacingAndGlyphs">No detail</text>
<text x="1416.00" y="861.00" textLength="8.27" lengthAdjust="spacingAndGlyphs">0</text>
<text x="1476.00" y="861.00" textLength="61.45" lengthAdjust="spacingAndGlyphs">15.08 MB</text>
<text x="1716.00" y="861.00" textLength="24.80" lengthAdjust="spacingAndGlyphs">186</text>
<text x="1816.00" y="861.00" textLength="8.27" lengthAdjust="spacingAndGlyphs">2</text>
<text x="1896.00" y="861.00" textLength="8.27" lengthAdjust="spacingAndGlyphs">2</text>
<text x="1604.27" y="861.00" textLength="45.45" lengthAdjust="spacingAndGlyphs">80,924</text>
<text x="16.00" y="900.00" textLength="262.86" lengthAdjust="spacingAndGlyphs">earthquakes_2005-01-01T00:00:00.00…</text>
<text x="296.00" y="900.00" textLength="80.92" lengthAdjust="spacingAndGlyphs">earthquakes</text>
<text x="436.00" y="900.00" textLength="146.52" lengthAdjust="spacingAndGlyphs">2005-01-01T00:00:0…</text>
<text x="596.00" y="900.00" textLength="146.52" lengthAdjust="spacingAndGlyphs">2006-01-01T00:00:0…</text>
<text x="756.00" y="900.00" textLength="146.52" lengthAdjust="spacingAndGlyphs">2024-06-25T10:34:4…</text>
<text x="916.00" y="900.00" textLength="66.69" lengthAdjust="spacingAndGlyphs">numbered</text>
<text x="1016.00" y="900.00" textLength="58.33" lengthAdjust="spacingAndGlyphs">No detail</text>
<text x="1416.00" y="900.00" textLength="8.27" lengthAdjust="spacingAndGlyphs">0</text>
<text x="1476.00" y="900.00" textLength="61.45" lengthAdjust="spacingAndGlyphs">15.30 MB</text>
<text x="1716.00" y="900.00" textLength="24.80" lengthAdjust="spacingAndGlyphs">185</text>
<text x="1816.00" y="900.00" textLength="8.27" lengthAdjust="spacingAndGlyphs">2</text>
<text x="1896.00" y="900.00" textLength="8.27" lengthAdjust="spacingAndGlyphs">2</text>
<text x="1604.27" y="900.00" textLength="45.45" lengthAdjust="spacingAndGlyphs">82,435</text>
<text x="16.00" y="939.00" textLength="262.86" lengthAdjust="spacingAndGlyphs">earthquakes_2004-01-01T00:00:00.00…</text>
<text x="296.00" y="939.00" textLength="80.92" lengthAdjust="spacingAndGlyphs">earthquakes</text>
<text x="436.00" y="939.00" textLength="146.52" lengthAdjust="spacingAndGlyphs">2004-01-01T00:00:0…</text>
<text x="596.00" y="939.00" textLength="146.52" lengthAdjust="spacingAndGlyphs">2005-01-01T00:00:0…</text>
<text x="756.00" y="939.00" textLength="146.52" lengthAdjust="spacingAndGlyphs">2024-06-25T10:34:4…</text>
<text x="916.00" y="939.00" textLength="66.69" lengthAdjust="spacingAndGlyphs">numbered</text>
<text x="1016.00" y="939.00" textLength="58.33" lengthAdjust="spacingAndGlyphs">No detail</text>
<text x="1416.00" y="939.00" textLength="8.27" lengthAdjust="spacingAndGlyphs">0</text>
<text x="1476.00" y="939.00" textLength="61.45" lengthAdjust="spacingAndGlyphs">17.05 MB</text>
<text x="1716.00" y="939.00" textLength="24.80" lengthAdjust="spacingAndGlyphs">183</text>
<text x="1816.00" y="939.00" textLength="8.27" lengthAdjust="spacingAndGlyphs">2</text>
<text x="1896.00" y="939.00" textLength="8.27" lengthAdjust="spacingAndGlyphs">2</text>
<text x="1604.27" y="939.00" textLength="45.45" lengthAdjust="spacingAndGlyphs">92,820</text>
<text x="16.00" y="978.00" textLength="262.86" lengthAdjust="spacingAndGlyphs">earthquakes_2003-01-01T00:00:00.00…</text>
<text x="296.00" y="978.00" textLength="80.92" lengthAdjust="spacingAndGlyphs">earthquakes</text>
<text x="436.00" y="978.00" textLength="146.52" lengthAdjust="spacingAndGlyphs">2003-01-01T00:00:0…</text>
<text x="596.00" y="978.00" textLength="146.52" lengthAdjust="spacingAndGlyphs">2004-01-01T00:00:0…</text>
<text x="756.00" y="978.00" textLength="146.52" lengthAdjust="spacingAndGlyphs">2024-06-25T10:34:4…</text>
<text x="916.00" y="978.00" textLength="66.69" lengthAdjust="spacingAndGlyphs">numbered</text>
<text x="1016.00" y="978.00" textLength="58.33" lengthAdjust="spacingAndGlyphs">No detail</text>
<text x="1416.00" y="978.00" textLength="8.27" lengthAdjust="spacingAndGlyphs">0</text>
<text x="1476.00" y="978.00" textLength="61.45" lengthAdjust="spacingAndGlyphs">15.61 MB</text>
<text x="1716.00" y="978.00" textLength="24.80" lengthAdjust="spacingAndGlyphs">183</text>
<text x="1816.00" y="978.00" textLength="8.27" lengthAdjust="spacingAndGlyphs">2</text>
<text x="1896.00" y="978.00" textLength="8.27" lengthAdjust="spacingAndGlyphs">2</text>
<text x="1604.27" y="978.00" textLength="45.45" lengthAdjust="spacingAndGlyphs">85,004</text>
<text x="16.00" y="1017.00" textLength="262.86" lengthAdjust="spacingAndGlyphs">earthquakes_2002-01-01T00:00:00.00…</text>
<text x="296.00" y="1017.00" textLength="80.92" lengthAdjust="spacingAndGlyphs">earthquakes</text>
<text x="436.00" y="1017.00" textLength="146.52" lengthAdjust="spacingAndGlyphs">2002-01-01T00:00:0…</text>
<text x="596.00" y="1017.00" textLength="146.52" lengthAdjust="spacingAndGlyphs">2003-01-01T00:00:0…</text>
<text x="756.00" y="1017.00" textLength="146.52" lengthAdjust="spacingAndGlyphs">2024-06-25T10:34:4…</text>
<text x="916.00" y="1017.00" textLength="66.69" lengthAdjust="spacingAndGlyphs">numbered</text>
<text x="1016.00" y="1017.00" textLength="58.33" lengthAdjust="spacingAndGlyphs">No detail</text>
<text x="1416.00" y="1017.00" textLength="8.27" lengthAdjust="spacingAndGlyphs">0</text>
<text x="1476.00" y="1017.00" textLength="61.45" lengthAdjust="spacingAndGlyphs">14.45 MB</text>
<text x="1716.00" y="1017.00" textLength="24.80" lengthAdjust="spacingAndGlyphs">181</text>
<text x="1816.00" y="1017.00" textLength="8.27" lengthAdjust="spacingAndGlyphs">2</text>
<text x="1896.00" y="1017.00" textLength="8.27" lengthAdjust="spacingAndGlyphs">2</text>
<text x="1604.27" y="1017.00" textLength="45.45" lengthAdjust="spacingAndGlyphs">79,772</text>
<text x="16.00" y="1056.00" textLength="262.86" lengthAdjust="spacingAndGlyphs">earthquakes_2001-01-01T00:00:00.00…</text>
<text x="296.00" y="1056.00" textLength="80.92" lengthAdjust="spacingAndGlyphs">earthquakes</text>
<text x="436.00" y="1056.00" textLength="146.52" lengthAdjust="spacingAndGlyphs">2001-01-01T00:00:0…</text>
<text x="596.00" y="1056.00" textLength="146.52" lengthAdjust="spacingAndGlyphs">2002-01-01T00:00:0…</text>
<text x="756.00" y="1056.00" textLength="146.52" lengthAdjust="spacingAndGlyphs">2024-06-25T10:34:4…</text>
<text x="916.00" y="1056.00" textLength="66.69" lengthAdjust="spacingAndGlyphs">numbered</text>
<text x="1016.00" y="1056.00" textLength="58.33" lengthAdjust="spacingAndGlyphs">No detail</text>
<text x="1416.00" y="1056.00" textLength="8.27" lengthAdjust="spacingAndGlyphs">0</text>
<text x="1476.00" y="1056.00" textLength="61.45" lengthAdjust="spacingAndGlyphs">11.68 MB</text>
<text x="1716.00" y="1056.00" textLength="24.80" lengthAdjust="spacingAndGlyphs">185</text>
<text x="1816.00" y="1056.00" textLength="8.27" lengthAdjust="spacingAndGlyphs">2</text>
<text x="1896.00" y="1056.00" textLength="8.27" lengthAdjust="spacingAndGlyphs">2</text>
<text x="1604.27" y="1056.00" textLength="45.45" lengthAdjust="spacingAndGlyphs">62,870</text>
</g>
<path d="M29,1078.8 L24,1083.5 L29,1088.2" stroke="#a9acc0" stroke-width="2" fill="none"/>
<path d="M53.5,1078.8 L58.5,1083.5 L53.5,1088.2" stroke="#a9acc0" stroke-width="2" fill="none"/>
<text x="85.50" y="1088.00" textLength="88.77" lengthAdjust="spacingAndGlyphs">Showing 1-50</text>
</svg></body></html>
